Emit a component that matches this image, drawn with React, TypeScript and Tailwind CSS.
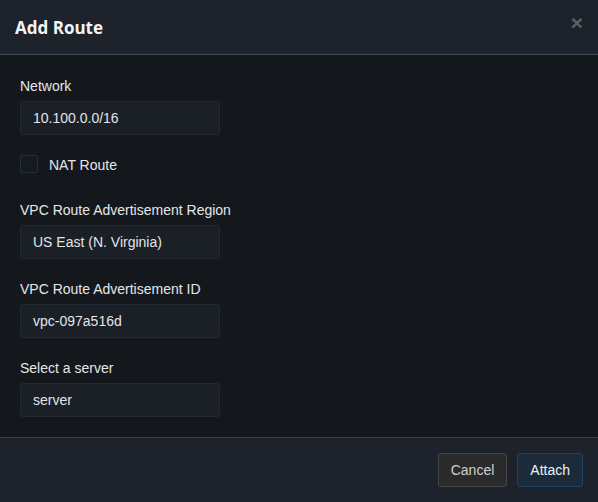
import React from "react";

const FIELDS_BEFORE = [{ label: "Network", value: "10.100.0.0/16" }];
const FIELDS_AFTER = [
  { label: "VPC Route Advertisement Region", value: "US East (N. Virginia)" },
  { label: "VPC Route Advertisement ID", value: "vpc-097a516d" },
  { label: "Select a server", value: "server" },
];

function Field({ label, value }: { label: string; value: string }) {
  return (
    <div className="mb-5 last:mb-0">
      <div className="h-5 text-[14px] leading-5 text-[#e4e6e8]">{label}</div>
      <div className="mt-[5px] flex h-[34px] w-[200px] items-center rounded-[3px] border border-[#202b34] bg-[#1b2026] px-3 text-[14px] text-[#e2e4e6]">
        {value}
      </div>
    </div>
  );
}

export default function App() {
  return (
    <div
      className="flex h-[502px] w-[598px] flex-col overflow-hidden bg-[#14181c]"
      style={{ fontFamily: '"Liberation Sans", Arial, sans-serif' }}
    >
      <div className="relative flex h-[55px] shrink-0 items-center border-b border-[#3a4c5a] bg-[#1e232b] px-[15px]">
        <h1
          className="pt-[2px] text-[17px] font-bold text-[#f2f3f4]"
          style={{ fontFamily: '"Open Sans", sans-serif' }}
        >
          Add Route
        </h1>
        <span className="absolute right-[15px] top-[9px] text-[21px] font-bold leading-[28px] text-[#5b6169]">
          ×
        </span>
      </div>

      <div className="flex-1 px-5 pt-[21px]">
        {FIELDS_BEFORE.map((f) => (
          <Field key={f.label} {...f} />
        ))}
        <div className="mb-[27px] flex h-[18px] items-center gap-[11px]">
          <span className="h-[18px] w-[18px] rounded-[2px] border border-[#22303a] bg-[#161b20]" />
          <span className="pt-[2px] text-[14px] text-[#e4e6e8]">NAT Route</span>
        </div>
        {FIELDS_AFTER.map((f) => (
          <Field key={f.label} {...f} />
        ))}
      </div>

      <div className="flex h-[65px] shrink-0 items-center justify-end gap-[10px] border-t border-[#344353] bg-[#1e232b] px-[15px]">
        <button className="h-[34px] rounded-[3px] border border-[#474747] bg-[#2a2a2a] px-3 text-[14px] text-[#cfd0d1]">
          Cancel
        </button>
        <button className="h-[34px] rounded-[3px] border border-[#1f4463] bg-[#1b2b39] px-3 text-[14px] text-[#eef1f4]">
          Attach
        </button>
      </div>
    </div>
  );
}
